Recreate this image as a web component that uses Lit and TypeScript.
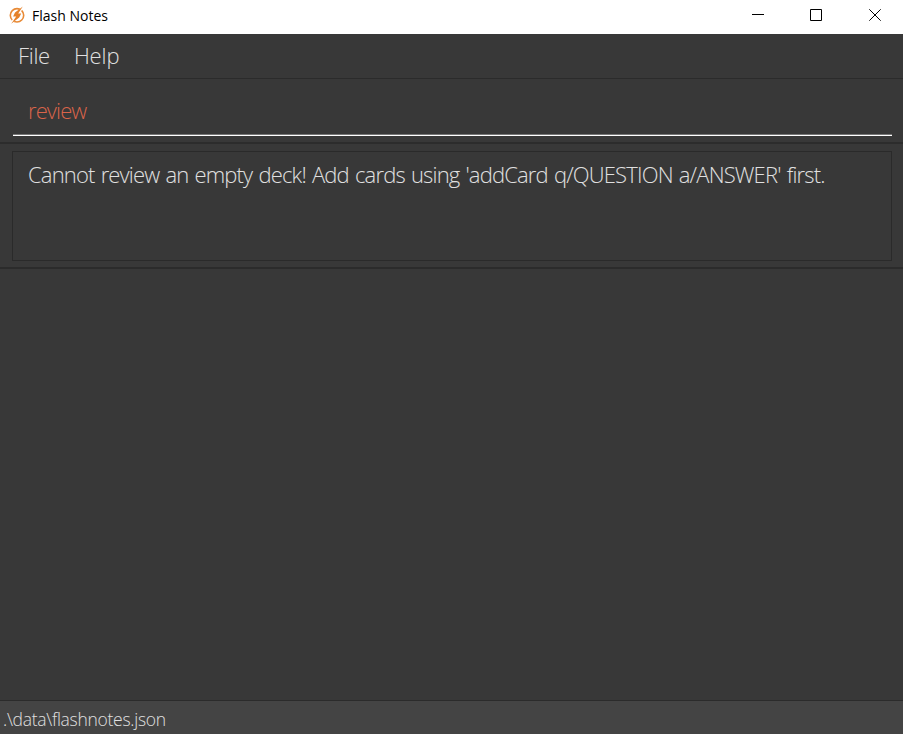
import { LitElement, html, css } from "lit";
import { customElement } from "lit/decorators.js";

@customElement("app-root")
export class AppRoot extends LitElement {
  static styles = css`
    :host {
      display: flex;
      flex-direction: column;
      height: 734px;
      background: #383838;
      color: #e0e0e0;
      font-family: "Segoe UI Light", "Open Sans", "Noto Sans", sans-serif;
      font-weight: 300;
      overflow: hidden;
    }
    * { box-sizing: border-box; }
    span { white-space: pre; }
    .title {
      display: flex;
      height: 34px;
      flex: none;
      background: #fff;
      color: #000;
      padding: 0 0 0 8px;
      font-weight: 400;
    }
    .logo { width: 18px; height: 18px; margin-top: 6px; }
    .name { font-size: 14px; line-height: 20px; margin: 6px auto 0 6px; }
    .win { width: 58px; height: 30px; flex: none; }
    .win:nth-last-child(1) { width: 56px; }
    .win:nth-last-child(2) { width: 62px; }
    .win:nth-last-child(3) { width: 54px; }
    .win svg { display: block; width: 12px; height: 12px; margin: 9px auto 0; }
    .menu {
      display: flex;
      gap: 24px;
      height: 45px;
      flex: none;
      padding-left: 18px;
      font-size: 22px;
      line-height: 42px;
      border-bottom: 1px solid #2b2b2b;
    }
    .command {
      height: 65px;
      flex: none;
      padding: 12px 11px 0 13px;
      border-bottom: 2px solid #2c2c2c;
    }
    .field {
      height: 45px;
      padding-left: 15px;
      border-bottom: 1px solid #fff;
      box-shadow: inset 0 -1px #777;
      font-size: 22px;
      line-height: 39px;
      color: #d9644a;
    }
    .result {
      height: 125px;
      flex: none;
      padding: 7px 11px 0 12px;
      border-bottom: 2px solid #2b2b2b;
    }
    .box {
      height: 110px;
      border: 1px solid #2a2a2a;
      padding: 8px 0 0 15px;
      font-size: 22px;
      line-height: 29px;
    }
    .content { flex: 1; }
    .status {
      height: 34px;
      flex: none;
      border-top: 1px solid #2b2b2b;
      background: #444;
      padding-left: 3px;
      font-size: 17.5px;
      line-height: 37px;
    }
    .file { letter-spacing: -0.3px; }
    .help { letter-spacing: -0.1px; }
    .input { letter-spacing: -0.9px; }
    .message { letter-spacing: -0.84px; word-spacing: 1.25px; }
    .path { letter-spacing: -0.28px; }
  `;

  render() {
    return html`
      <div class="title">
        <svg class="logo" viewBox="0 0 18 18">
          <circle cx="9" cy="9.3" r="6.7" fill="none" stroke="#e88a36" stroke-width="1.6" />
          <path d="M14.8 .6 3.2 17.7" stroke="#fff" stroke-width="2.4" />
          <path d="M14.8 .6 7 6.4 5.1 10.4h3.1L3.2 17.7 11.2 11.6l2-4.2h-3z" fill="#e58129" />
        </svg>
        <span class="name">Flash Notes</span>
        <div class="win"><svg viewBox="0 0 12 12"><path d="M0 5.5h12" stroke="#000" /></svg></div>
        <div class="win"><svg viewBox="0 0 12 12"><path d="M.5.5h11v11H.5z" fill="none" stroke="#000" /></svg></div>
        <div class="win"><svg viewBox="0 0 12 12"><path d="M.3.3l11.4 11.4M11.7.3.3 11.7" stroke="#000" /></svg></div>
      </div>
      <div class="menu"><span class="file">File</span><span class="help">Help</span></div>
      <div class="command"><div class="field"><span class="input">review</span></div></div>
      <div class="result"><div class="box"><span class="message">Cannot review an empty deck! Add cards using 'addCard q/QUESTION a/ANSWER' first.</span></div></div>
      <div class="content"></div>
      <div class="status"><span class="path">.\\data\\flashnotes.json</span></div>
    `;
  }
}
